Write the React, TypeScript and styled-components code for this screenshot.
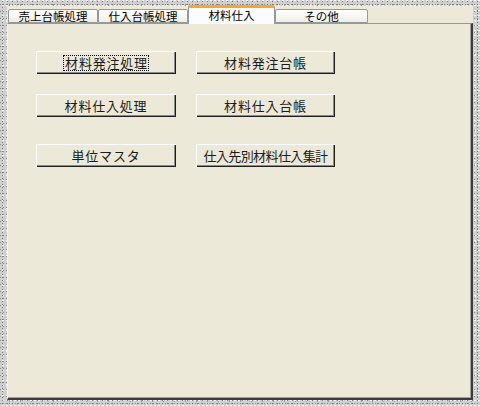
import React from "react";
import styled, { createGlobalStyle } from "styled-components";

const Global = createGlobalStyle`
  html, body { margin: 0; padding: 0; }
  body { font-family: "Noto Sans CJK JP", "Noto Sans", sans-serif; }
`;

const Frame = styled.div`
  width: 480px;
  height: 406px;
  box-sizing: border-box;
  padding: 6px 7px 6px 7px;
  display: flex;
  background-color: #cfcfcf;
  background-image:
    radial-gradient(circle, #7a7a7a 0.6px, transparent 0.8px),
    radial-gradient(circle, #8c8c8c 0.6px, transparent 0.8px),
    radial-gradient(circle, #f4f4f4 0.7px, transparent 0.9px),
    radial-gradient(circle, #999999 0.6px, transparent 0.8px),
    radial-gradient(circle, #ffffff 0.6px, transparent 0.8px);
  background-size: 5px 3px, 3px 7px, 4px 5px, 11px 6px, 7px 11px;
  background-position: 0 0, 2px 1px, 1px 3px, 4px 2px, 3px 5px;
`;

const Window = styled.div`
  flex: 1;
  display: flex;
  flex-direction: column;
  background: #ece9d8;
`;

const TabStrip = styled.div`
  height: 17px;
  display: flex;
  align-items: flex-end;
  padding-left: 1px;
  position: relative;
  z-index: 2;
`;

const Tab = styled.div<{ $w: number; $active?: boolean }>`
  width: ${(p) => p.$w}px;
  box-sizing: border-box;
  height: ${(p) => (p.$active ? 19 : 14)}px;
  margin-bottom: ${(p) => (p.$active ? -1 : 0)}px;
  display: flex;
  align-items: center;
  justify-content: center;
  font-size: 11.5px;
  line-height: 1;
  color: #000;
  background: ${(p) =>
    p.$active ? "#fcfcfe" : "linear-gradient(#ffffff, #f1efe6)"};
  border: 1px solid #919b9c;
  border-bottom: ${(p) => (p.$active ? "none" : "1px solid #919b9c")};
  border-top: ${(p) => (p.$active ? "3px solid #f2a92e" : "1px solid #919b9c")};
  border-radius: 2px 2px 0 0;
  padding-top: ${(p) => (p.$active ? 0 : 2)}px;
`;

const Panel = styled.div`
  flex: 1;
  border-top: 1px solid #919b9c;
  border-left: 1px solid #f4f3ee;
  border-right: 2px solid #3c3c3c;
  border-bottom: 2px solid #3c3c3c;
  box-shadow: inset -1px -1px 0 #a0a0a0;
  padding: 27px 0 0 28px;
  display: flex;
  flex-direction: column;
`;

const Group = styled.div<{ $gap?: number }>`
  display: grid;
  grid-template-columns: 140px 139px;
  grid-auto-rows: 23px;
  column-gap: 20px;
  row-gap: 20px;
  margin-top: ${(p) => p.$gap ?? 0}px;
`;

const Button = styled.button<{ $ls?: number }>`
  box-sizing: border-box;
  height: 23px;
  padding: 0;
  margin: 0;
  background: #ece9d8;
  border: none;
  box-shadow: inset 1px 1px 0 #ffffff, inset -1px -1px 0 #1e1e1e,
    inset -2px -2px 0 #8a8a8a;
  font-family: "Noto Sans CJK JP", "Noto Sans", sans-serif;
  font-size: 13px;
  letter-spacing: ${(p) => p.$ls ?? 0.8}px;
  color: #1a1a1a;
  display: flex;
  align-items: center;
  justify-content: center;
`;

const Focus = styled.span`
  outline: 1px dotted #000;
  outline-offset: 0;
  padding: 0 0 0 1px;
  line-height: 14px;
`;

export default function App() {
  return (
    <>
      <Global />
      <Frame>
        <Window>
          <TabStrip>
            <Tab $w={90}>売上台帳処理</Tab>
            <Tab $w={90}>仕入台帳処理</Tab>
            <Tab $w={87} $active>
              材料仕入
            </Tab>
            <Tab $w={93}>その他</Tab>
          </TabStrip>
          <Panel>
            <Group>
              <Button>
                <Focus>材料発注処理</Focus>
              </Button>
              <Button>材料発注台帳</Button>
              <Button>材料仕入処理</Button>
              <Button>材料仕入台帳</Button>
            </Group>
            <Group $gap={27}>
              <Button>単位マスタ</Button>
              <Button $ls={-0.6}>仕入先別材料仕入集計</Button>
            </Group>
          </Panel>
        </Window>
      </Frame>
    </>
  );
}
